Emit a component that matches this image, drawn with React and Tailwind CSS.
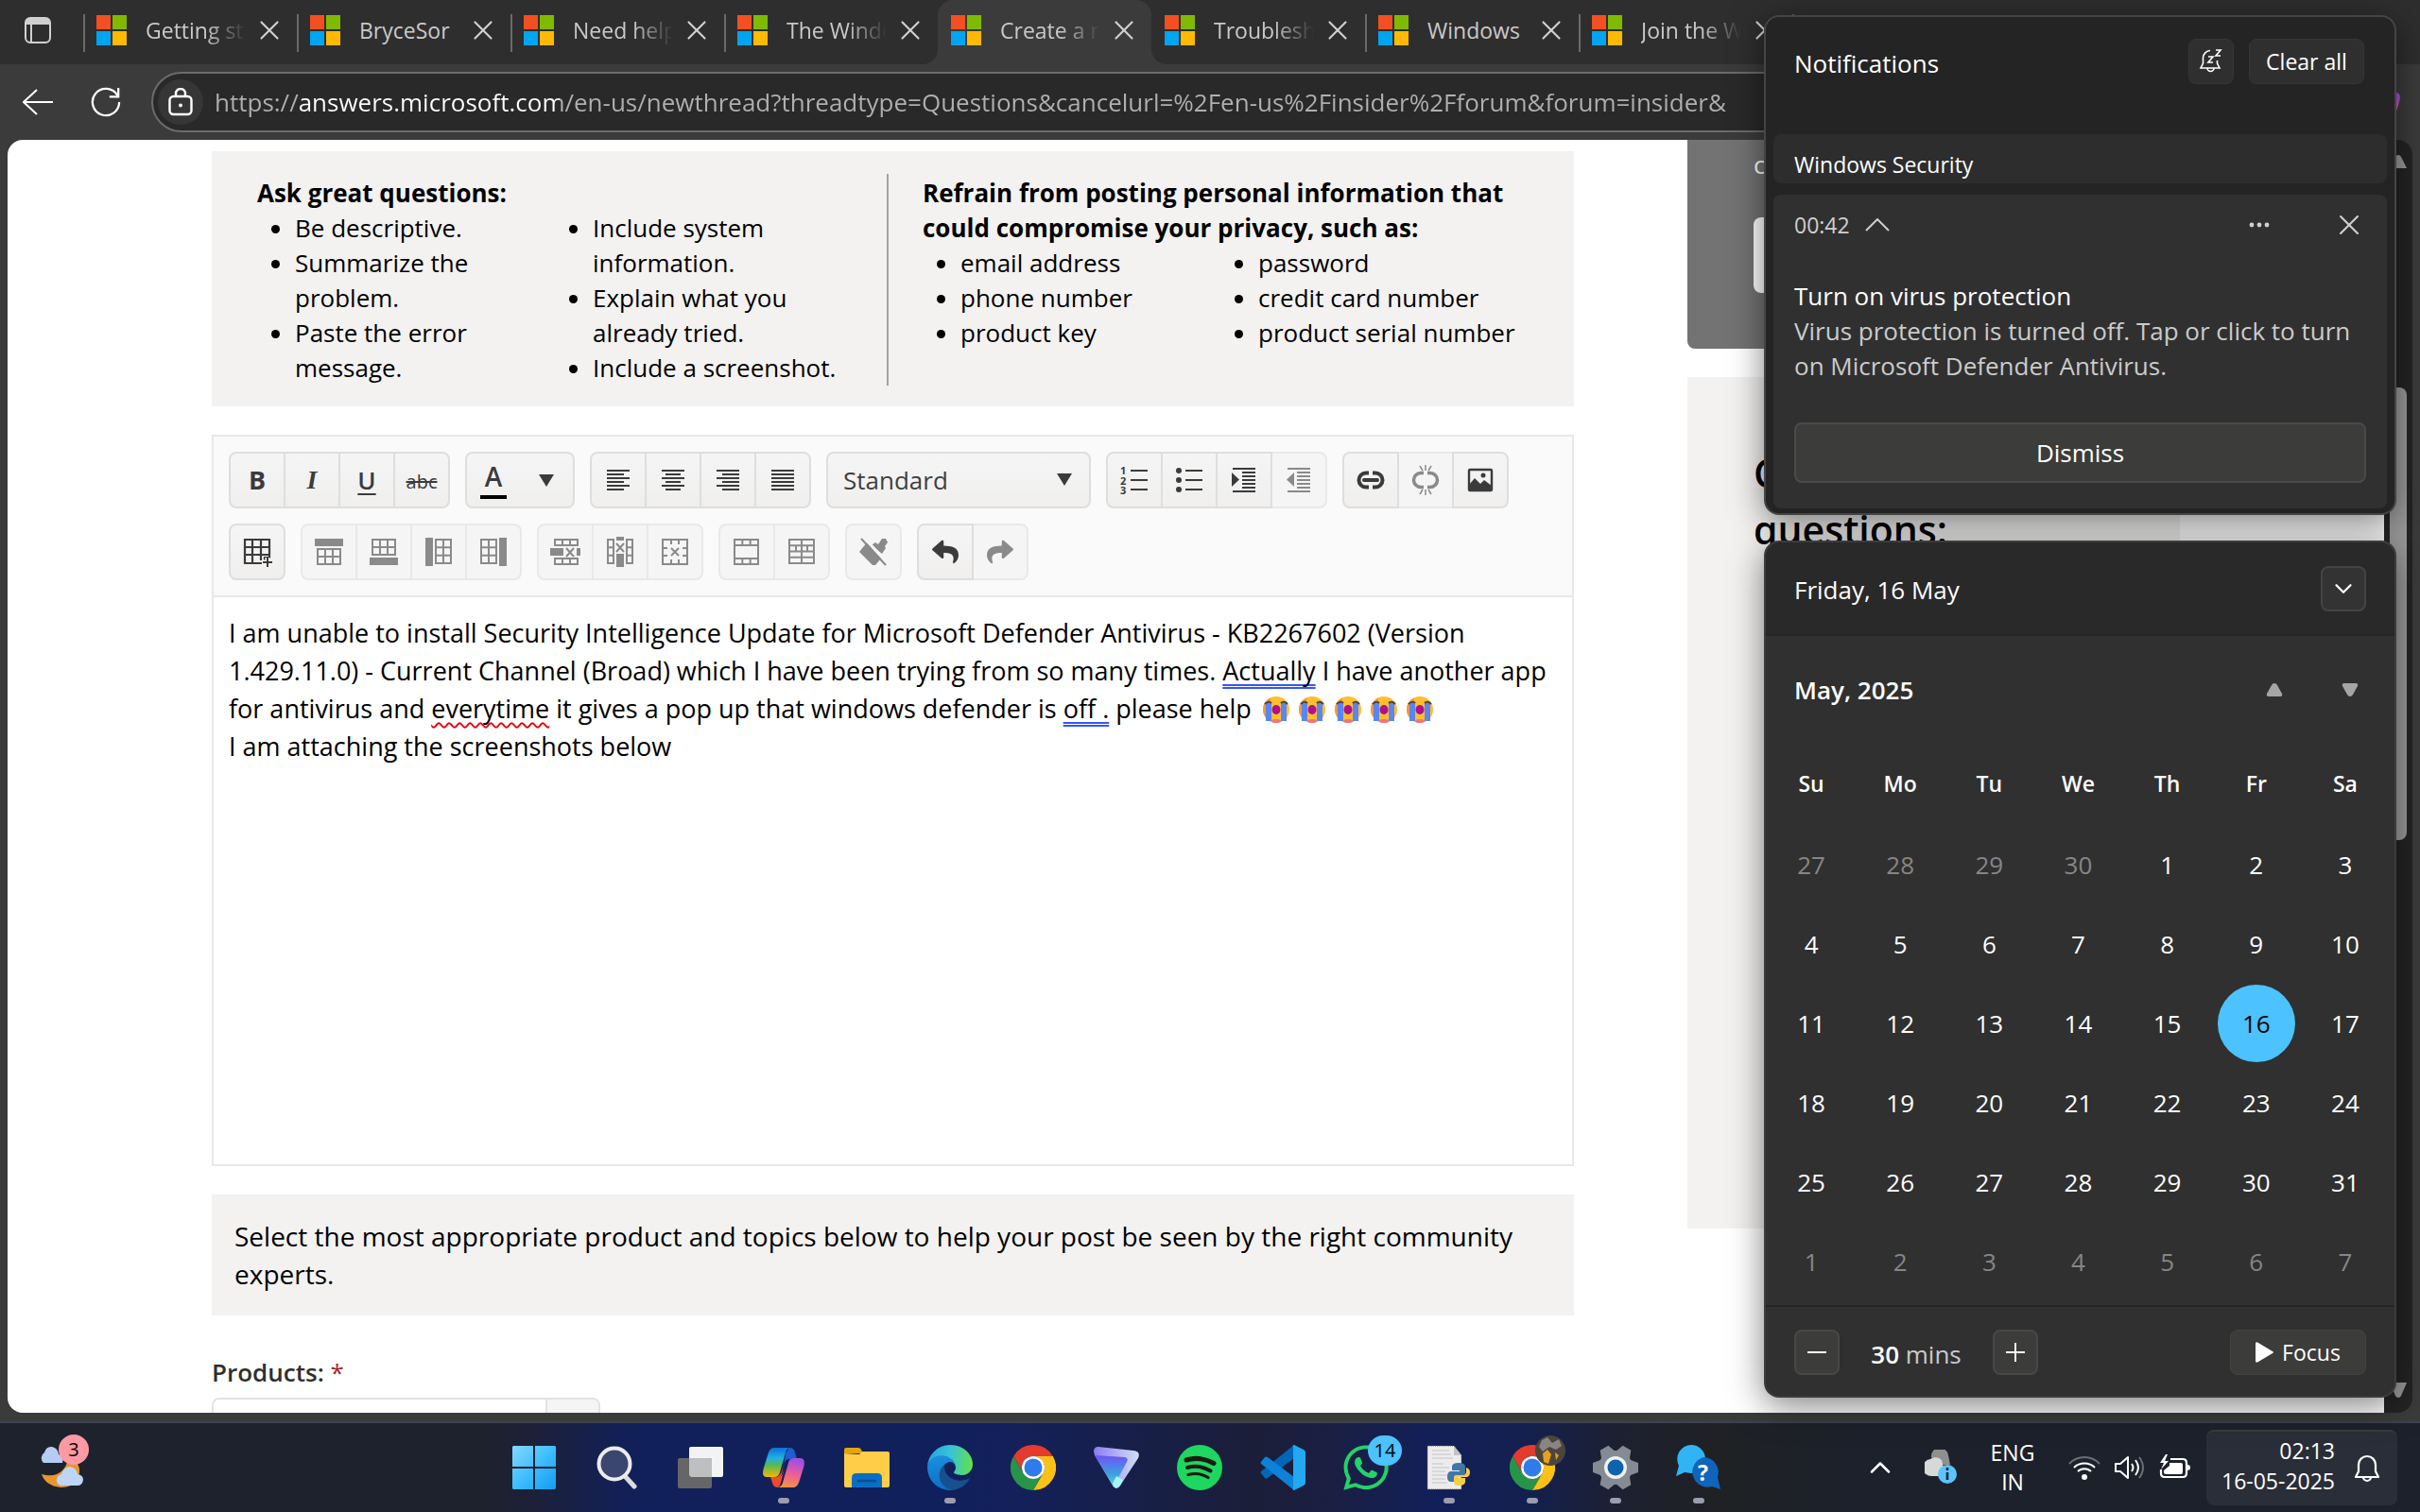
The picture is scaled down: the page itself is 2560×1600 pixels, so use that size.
import { X, ChevronUp, ChevronDown } from "lucide-react"
import { FaWhatsapp, FaReply, FaShare } from "react-icons/fa"

const tabs = [
  { title: "Getting started", fade: true },
  { title: "BryceSor", fade: false },
  { title: "Need help with", fade: true },
  { title: "The Windows", fade: true },
  { title: "Create a new", fade: true, active: true },
  { title: "Troubleshoot", fade: true },
  { title: "Windows", fade: false },
  { title: "Join the Windows", fade: true },
  { title: "Windows", fade: true },
]

const weekdays = ["Su", "Mo", "Tu", "We", "Th", "Fr", "Sa"]
const weeks = [
  [27, 28, 29, 30, 1, 2, 3],
  [4, 5, 6, 7, 8, 9, 10],
  [11, 12, 13, 14, 15, 16, 17],
  [18, 19, 20, 21, 22, 23, 24],
  [25, 26, 27, 28, 29, 30, 31],
  [1, 2, 3, 4, 5, 6, 7],
]

/* ---------- Browser chrome ---------- */

function MicrosoftLogo() {
  return (
    <svg width="32" height="32" viewBox="0 0 32 32" className="shrink-0">
      <rect width="15" height="15" fill="#f25022" />
      <rect x="17" width="15" height="15" fill="#7fba00" />
      <rect y="17" width="15" height="15" fill="#00a4ef" />
      <rect x="17" y="17" width="15" height="15" fill="#ffb900" />
    </svg>
  )
}

function TabStrip() {
  return (
    <div className="flex h-[68px] overflow-hidden bg-[#2e2e2e]">
      <button aria-label="Tab actions menu" className="w-[88px] shrink-0 pb-1 pl-[26px]">
        <svg width="28" height="28" viewBox="0 0 28 28">
          <rect x="1" y="1" width="26" height="26" rx="5" fill="none" stroke="#d0d0d0" strokeWidth="2" />
          <path d="M1 8V6a5 5 0 0 1 5-5h16a5 5 0 0 1 5 5v2z" fill="#d0d0d0" />
          <path d="M7 8v18" stroke="#d0d0d0" strokeWidth="2" />
        </svg>
      </button>
      {tabs.map((tab, i) => (
        <div
          key={i}
          className={
            tab.active
              ? "relative flex w-[226px] shrink-0 items-center rounded-t-2xl bg-[#3b3b3b] pb-1 pl-[14px]"
              : "relative flex w-[226px] shrink-0 items-center pb-1 pl-[14px]"
          }
        >
          {!tab.active && i !== 5 && <span className="absolute top-[15px] left-0 h-10 w-[2px] bg-[#6a6a6a]" />}
          {tab.active && (
            <>
              <svg className="absolute bottom-0 -left-4" width="16" height="16">
                <path d="M16 0v16H0A16 16 0 0 0 16 0z" fill="#3b3b3b" />
              </svg>
              <svg className="absolute -right-4 bottom-0" width="16" height="16">
                <path d="M0 0v16h16A16 16 0 0 1 0 0z" fill="#3b3b3b" />
              </svg>
            </>
          )}
          <MicrosoftLogo />
          <span
            className={
              tab.fade
                ? "ml-5 w-[106px] overflow-hidden text-[23px] whitespace-nowrap text-[#c9c9c9] [mask-image:linear-gradient(to_right,#000_60%,transparent)]"
                : "ml-5 w-[106px] overflow-hidden text-[23px] whitespace-nowrap text-[#c9c9c9]"
            }
          >
            {tab.title}
          </span>
          <button aria-label={`Close ${tab.title}`} className="ml-2 text-[#d0d0d0]">
            <X size={34} strokeWidth={1.5} />
          </button>
        </div>
      ))}
    </div>
  )
}

function AddressBar() {
  return (
    <div className="flex h-20 items-center bg-[#3b3b3b] pr-[21px] pl-6">
      <button aria-label="Back" className="flex w-8 shrink-0 justify-center">
        <svg width="32" height="28" viewBox="0 0 32 28" fill="none" stroke="#fff" strokeWidth="2">
          <path d="M15 1L1 14l14 13M1 14h31" />
        </svg>
      </button>
      <button aria-label="Refresh" className="ml-10 shrink-0">
        <svg width="32" height="34" viewBox="0 0 34 34" fill="none" stroke="#fff" strokeWidth="2.4">
          <path d="M30 9.500A15 15 0 1 0 32 17" />
          <path d="M31 1v10H21" />
        </svg>
      </button>
      <div className="ml-8 flex h-16 flex-1 items-center rounded-full border-2 border-[#6b6b6b] bg-[#292929] pl-[5px]">
        <button aria-label="Site information" className="flex size-12 shrink-0 items-center justify-center rounded-full bg-[#363636]">
          <svg width="26" height="30" viewBox="0 0 26 30" fill="none" stroke="#fff" strokeWidth="2.400">
            <rect x="1.500" y="9" width="23" height="19" rx="4" />
            <path d="M8 9V6a5 5 0 0 1 10 0v3" />
            <circle cx="13" cy="18.500" r="2" fill="#fff" stroke="none" />
          </svg>
        </button>
        <input
          aria-label="Address"
          defaultValue="https://answers.microsoft.com/en-us/newthread?threadtype=Questions&cancelurl=%2Fen-us%2Finsider%2Fforum&forum=insider&"
          className="ml-3 w-full bg-transparent bg-[linear-gradient(to_right,#b0b0b0_90px,#fff_90px,#fff_365px,#b0b0b0_365px)] bg-clip-text text-[26px] text-transparent outline-none"
        />
      </div>
      <button aria-label="Copilot" className="ml-2 shrink-0">
        <CopilotLogo size={44} />
      </button>
    </div>
  )
}

/* ---------- Page ---------- */

function Guidance() {
  return (
    <section className="flex bg-[#f3f2f1] pt-6 pr-8 pb-[22px] pl-12 text-[26px] leading-[37px] text-black">
      <div className="w-[666px] shrink-0 pt-[2px]">
        <h2 className="font-bold">Ask great questions:</h2>
        <div className="grid w-[630px] grid-cols-2">
          <ul className="list-disc pl-10">
            <li>Be descriptive.</li>
            <li>Summarize the problem.</li>
            <li>Paste the error message.</li>
          </ul>
          <ul className="list-disc pl-10">
            <li>Include system information.</li>
            <li>Explain what you already tried.</li>
            <li>Include a screenshot.</li>
          </ul>
        </div>
      </div>
      <div className="flex-1 border-l-2 border-[#a3a3a3] pt-[2px] pl-9">
        <h2 className="font-bold">Refrain from posting personal information that could compromise your privacy, such as:</h2>
        <div className="grid grid-cols-[315px_1fr]">
          <ul className="list-disc pl-10">
            <li>email address</li>
            <li>phone number</li>
            <li>product key</li>
          </ul>
          <ul className="list-disc pl-10">
            <li>password</li>
            <li>credit card number</li>
            <li>product serial number</li>
          </ul>
        </div>
      </div>
    </section>
  )
}

// Outline of a table, split evenly into rows and columns
function Grid({ x, y, w, h, cols, rows }) {
  let d = `M${x} ${y}h${w}v${h}h${-w}z`
  for (let c = 1; c < cols; c++) d += `M${x + (w * c) / cols} ${y}v${h}`
  for (let r = 1; r < rows; r++) d += `M${x} ${y + (h * r) / rows}h${w}`
  return <path d={d} fill="none" stroke="currentColor" strokeWidth="2" />
}

function Lines({ items, h = 2 }) {
  return items.map(([x, y, w]) => <rect key={y} x={x} y={y} width={w} height={h} fill="currentColor" />)
}

function Icon({ children }) {
  return (
    <svg width="32" height="32" viewBox="0 0 32 32">
      {children}
    </svg>
  )
}

const alignLeft = [[4, 5, 24], [4, 9, 18], [4, 13, 24], [4, 17, 18], [4, 21, 24], [4, 25, 18]]
const alignCenter = [[4, 5, 24], [8, 9, 16], [4, 13, 24], [8, 17, 16], [4, 21, 24], [8, 25, 16]]
const alignRight = [[4, 5, 24], [10, 9, 18], [4, 13, 24], [10, 17, 18], [4, 21, 24], [10, 25, 18]]
const justify = [[4, 5, 24], [4, 9, 24], [4, 13, 24], [4, 17, 24], [4, 21, 24], [4, 25, 24]]
const indentLines = [[4, 3, 24], [14, 7, 14], [14, 11, 14], [14, 15, 14], [14, 19, 14], [14, 23, 14], [4, 27, 24]]

const linkRings = "M14 8.500H11a7.500 7.500 0 0 0 0 15h3M18 8.500h3a7.500 7.500 0 0 1 0 15h-3"

const rowOne = [
  [
    { label: "Bold", icon: <span className="text-[27px] font-bold">B</span> },
    { label: "Italic", icon: <span className="font-['Liberation_Serif',serif] text-[28px] font-bold italic">I</span> },
    { label: "Underline", icon: <span className="text-[26px] leading-[32px] font-semibold underline decoration-2 underline-offset-4">U</span> },
    { label: "Strikethrough", icon: <span className="pt-1 text-[20px] line-through">abc</span> },
  ],
  [
    {
      label: "Font color",
      side: "left",
      icon: (
        <span className="flex flex-col items-center text-[28px] leading-[32px] font-semibold">
          A<span className="mt-1 h-1 w-7 bg-black" />
        </span>
      ),
    },
    { label: "More colors", side: "right", icon: <Icon><path d="M8 10h16l-8 13z" fill="currentColor" /></Icon> },
  ],
  [
    { label: "Align left", icon: <Icon><Lines items={alignLeft} /></Icon> },
    { label: "Center", icon: <Icon><Lines items={alignCenter} /></Icon> },
    { label: "Align right", icon: <Icon><Lines items={alignRight} /></Icon> },
    { label: "Justify", icon: <Icon><Lines items={justify} /></Icon> },
  ],
]

const rowOneEnd = [
  [
    {
      label: "Numbered list",
      icon: (
        <Icon>
          <Lines items={[[12, 5, 18], [12, 15, 18], [12, 25, 18]]} />
          <text x="1" y="10" fontSize="11" fontWeight="700" fill="currentColor">1</text>
          <text x="1" y="21" fontSize="11" fontWeight="700" fill="currentColor">2</text>
          <text x="1" y="31" fontSize="11" fontWeight="700" fill="currentColor">3</text>
        </Icon>
      ),
    },
    {
      label: "Bulleted list",
      icon: (
        <Icon>
          <Lines items={[[12, 5, 18], [12, 15, 18], [12, 25, 18]]} />
          <circle cx="5" cy="6" r="3" fill="currentColor" />
          <circle cx="5" cy="16" r="3" fill="currentColor" />
          <circle cx="5" cy="26" r="3" fill="currentColor" />
        </Icon>
      ),
    },
    { label: "Indent", icon: <Icon><Lines items={indentLines} /><path d="M3 8v15l8-7.500z" fill="currentColor" /></Icon> },
    { label: "Outdent", disabled: true, icon: <Icon><Lines items={indentLines} /><path d="M11 8v15l-8-7.500z" fill="currentColor" /></Icon> },
  ],
  [
    {
      label: "Insert link",
      icon: (
        <Icon>
          <path d={linkRings} fill="none" stroke="currentColor" strokeWidth="4" />
          <path d="M9 16h14" stroke="currentColor" strokeWidth="4" strokeLinecap="round" />
        </Icon>
      ),
    },
    {
      label: "Remove link",
      disabled: true,
      icon: (
        <Icon>
          <path d={linkRings} fill="none" stroke="currentColor" strokeWidth="3.500" />
          <path d="M16 0v6M10 1l3 5M22 1l-3 5M16 26v6M10 31l3-5M22 31l-3-5" stroke="currentColor" strokeWidth="1.500" />
        </Icon>
      ),
    },
    {
      label: "Insert image",
      icon: (
        <Icon>
          <rect x="4" y="5" width="24" height="22" rx="1" fill="none" stroke="currentColor" strokeWidth="2.400" />
          <path d="M4 21l6-7 6 6 4-4 8 6v5H4z" fill="currentColor" />
          <circle cx="19" cy="11" r="2.500" fill="currentColor" />
        </Icon>
      ),
    },
  ],
]

const rowTwo = [
  [
    {
      label: "Create table",
      icon: (
        <Icon>
          <path d="M3 3h26v19h-5v6H3zM11 3v25M20 3v22M3 11h26M3 19h26" fill="none" stroke="currentColor" strokeWidth="2.200" />
          <path d="M21 27h11M27 22v10" stroke="#f3f3f3" strokeWidth="5" />
          <path d="M22 27h10M27 22v10" stroke="currentColor" strokeWidth="2" />
        </Icon>
      ),
    },
  ],
  [
    { label: "Add row above", disabled: true, icon: <Icon><rect x="1" y="2" width="30" height="8" fill="currentColor" /><Grid x={4} y={13} w={24} h={16} cols={3} rows={2} /></Icon> },
    { label: "Add row below", disabled: true, icon: <Icon><Grid x={4} y={3} w={24} h={16} cols={3} rows={2} /><rect x="1" y="22" width="30" height="8" fill="currentColor" /></Icon> },
    { label: "Add column left", disabled: true, icon: <Icon><rect x="2" y="1" width="8" height="30" fill="currentColor" /><Grid x={13} y={3} w={16} h={25} cols={2} rows={3} /></Icon> },
    { label: "Add column right", disabled: true, icon: <Icon><Grid x={3} y={3} w={16} h={25} cols={2} rows={3} /><rect x="22" y="1" width="8" height="30" fill="currentColor" /></Icon> },
  ],
  [
    {
      label: "Delete row",
      disabled: true,
      icon: <Icon><Grid x={5} y={3} w={24} h={6} cols={3} rows={1} /><rect y="12" width="14" height="8" fill="currentColor" /><path d="M17 12l8 9M25 12l-8 9" stroke="currentColor" strokeWidth="2" /><rect x="28" y="12" width="4" height="8" fill="currentColor" /><Grid x={5} y={23} w={24} h={6} cols={3} rows={1} /></Icon>,
    },
    {
      label: "Delete column",
      disabled: true,
      icon: <Icon><Grid x={3} y={3} w={6} h={25} cols={1} rows={3} /><rect x="12" y="0" width="8" height="4" fill="currentColor" /><path d="M12 7l8 9M20 7l-8 9" stroke="currentColor" strokeWidth="2" /><rect x="12" y="18" width="8" height="14" fill="currentColor" /><Grid x={23} y={3} w={6} h={25} cols={1} rows={3} /></Icon>,
    },
    {
      label: "Delete table",
      disabled: true,
      icon: <Icon><Grid x={3} y={3} w={26} h={26} cols={1} rows={1} /><path d="M12 3v5M20 3v5M12 24v5M20 24v5M3 12h5M3 20h5M24 12h5M24 20h5M12 12l8 8M20 12l-8 8" stroke="currentColor" strokeWidth="2" /></Icon>,
    },
  ],
  [
    { label: "Merge cells", disabled: true, icon: <Icon><Grid x={3} y={3} w={25} h={26} cols={1} rows={1} /><Grid x={3} y={3} w={25} h={6} cols={3} rows={1} /><Grid x={3} y={23} w={25} h={6} cols={3} rows={1} /></Icon> },
    { label: "Split cell", disabled: true, icon: <Icon><Grid x={3} y={3} w={26} h={25} cols={2} rows={4} /><path d="M10 9v6M22 9v6" stroke="currentColor" strokeWidth="2" /></Icon> },
  ],
  [
    {
      label: "Clear formatting",
      disabled: true,
      icon: (
        <Icon>
          <path d="M1 16l8-10 15 17-6 7h-3z" fill="currentColor" />
          <path d="M14 9l4-3 3 2 4-6h4l2 4-3 4 1 2-4 6z" fill="currentColor" />
          <path d="M6 1l25 27" stroke="#f5f5f5" strokeWidth="3" />
          <path d="M3 2l26 28" stroke="currentColor" strokeWidth="2" />
        </Icon>
      ),
    },
  ],
  [
    { label: "Undo", icon: <FaReply size={28} /> },
    { label: "Redo", disabled: true, icon: <FaShare size={28} /> },
  ],
]

function buttonClass(b) {
  if (b.side === "left")
    return "flex h-[60px] w-[58px] items-center justify-center rounded-l-lg border-2 border-r-0 border-[#dedede] bg-linear-to-b from-[#f5f5f5] to-[#f0efee] text-[#3b3b3b]"
  if (b.side === "right")
    return "flex h-[60px] w-[58px] items-center justify-center rounded-r-lg border-2 border-l-0 border-[#dedede] bg-linear-to-b from-[#f5f5f5] to-[#f0efee] text-[#3b3b3b]"
  if (b.disabled)
    return "flex h-[60px] w-[60px] items-center justify-center border-2 border-[#e9e9e9] bg-[#f5f5f5] text-[#8a8a8a] not-first:-ml-[2px] first:rounded-l-lg last:rounded-r-lg"
  return "relative flex h-[60px] w-[60px] items-center justify-center border-2 border-[#dedede] bg-linear-to-b from-[#f5f5f5] to-[#f0efee] text-[#3b3b3b] not-first:-ml-[2px] first:rounded-l-lg last:rounded-r-lg"
}

function ButtonGroup({ buttons }) {
  return (
    <div className="flex">
      {buttons.map((b) => (
        <button key={b.label} aria-label={b.label} disabled={b.disabled} className={buttonClass(b)}>
          {b.icon}
        </button>
      ))}
    </div>
  )
}

function CryingFace() {
  return (
    <svg role="img" aria-label="loudly crying face" className="mx-[5px] inline-block align-[-5px]" width="28" height="28" viewBox="0 0 28 28">
      <circle cx="14" cy="14" r="14" fill="#fdbf2d" />
      <path d="M0 14A14 14 0 0 1 8 1.400V26A14 14 0 0 1 0 14z" fill="#ee9a3c" />
      <rect x="3" y="7" width="6" height="19" fill="#5b85f5" />
      <rect x="19" y="7" width="6" height="19" fill="#5b85f5" />
      <path d="M2 8q4-4 7-1M19 7q3-3 7 1" stroke="#47434f" strokeWidth="2" fill="none" />
      <ellipse cx="14" cy="14" rx="4.500" ry="5" fill="#b0108a" />
      <ellipse cx="14" cy="26" rx="5" ry="2" fill="#f0747c" />
    </svg>
  )
}

function Editor() {
  return (
    <section className="mt-[30px] border-2 border-[#e8e8e8] bg-white">
      <div role="toolbar" aria-label="Formatting" className="flex flex-col gap-4 border-b-2 border-[#e8e8e8] bg-[#fafafa] p-4">
        <div className="flex gap-4">
          {rowOne.map((g, i) => <ButtonGroup key={i} buttons={g} />)}
          <div className="relative">
            <select
              aria-label="Text style"
              className="h-[60px] w-[280px] appearance-none rounded-lg border-2 border-[#dedede] bg-linear-to-b from-[#f5f5f5] to-[#f0efee] pl-4 text-[26px] text-[#3f3f3f]"
            >
              <option>Standard</option>
              <option>Heading</option>
            </select>
            <svg className="pointer-events-none absolute top-[23px] right-5" width="16" height="13">
              <path d="M0 0h16L8 13z" fill="#3b3b3b" />
            </svg>
          </div>
          {rowOneEnd.map((g, i) => <ButtonGroup key={i} buttons={g} />)}
        </div>
        <div className="flex gap-4">
          {rowTwo.map((g, i) => <ButtonGroup key={i} buttons={g} />)}
        </div>
      </div>
      <div
        role="textbox"
        aria-label="Question details"
        aria-multiline="true"
        contentEditable
        suppressContentEditableWarning
        spellCheck={false}
        className="min-h-[600px] px-4 pt-[18px] text-[27px] leading-[40px] text-black outline-none"
      >
        <p>
          I am unable to install Security Intelligence Update for Microsoft Defender Antivirus - KB2267602 (Version
          1.429.11.0) - Current Channel (Broad) which I have been trying from so many times.{" "}
          <span className="underline decoration-[#3355ff] decoration-double decoration-2 underline-offset-4 [text-decoration-skip-ink:none]">Actually</span> I have
          another app for antivirus and <span className="underline decoration-red-600 decoration-wavy decoration-2 underline-offset-4 [text-decoration-skip-ink:none]">everytime</span> it gives a pop up
          that windows defender is{" "}
          <span className="underline decoration-[#3355ff] decoration-double decoration-2 underline-offset-4">off .</span> please help{" "}
          <CryingFace />
          <CryingFace />
          <CryingFace />
          <CryingFace />
          <CryingFace />
        </p>
        <p>I am attaching the screenshots below</p>
      </div>
    </section>
  )
}

function ProductPicker() {
  return (
    <>
      <section className="mt-[30px] bg-[#f3f2f1] px-6 py-6 text-[28px] leading-[40px] text-black">
        Select the most appropriate product and topics below to help your post be seen by the right community experts.
      </section>
      <label htmlFor="products" className="mt-10 block text-[26px] leading-[40px] font-semibold text-[#2f2f2f]">
        Products: <span className="font-normal text-[#a4262c]">*</span>
      </label>
      <div className="mt-[7px] flex h-[60px] w-[411px] overflow-hidden rounded-lg border-2 border-[#e3e3e3]">
        <input id="products" className="min-w-0 flex-1 bg-white" />
        <button aria-label="Open product list" className="w-14 border-l-2 border-[#e3e3e3] bg-[#f5f5f5]" />
      </div>
    </>
  )
}

function Sidebar() {
  return (
    <aside className="w-[521px] shrink-0">
      <div className="h-[221px] rounded-b-lg bg-[#737373] px-[70px] pt-[6px] text-[26px] leading-[40px] text-white">
        <label htmlFor="search">content</label>
        <input id="search" className="mt-9 block h-20 w-full rounded-lg bg-white" />
      </div>
      <div className="mt-[30px] h-[901px] bg-[#f3f2f1] px-[70px] pt-[71px]">
        <h2 className="w-[240px] text-[41px] leading-[60px] font-semibold text-black">Common questions:</h2>
      </div>
    </aside>
  )
}

function Page() {
  return (
    <div className="flex min-h-0 flex-1 bg-[#3b3b3b] px-2 pb-[9px]">
      <div className="min-w-0 flex-1 overflow-hidden rounded-l-2xl bg-white">
        <div className="flex gap-[120px] px-[216px]">
          <main className="min-w-0 flex-1 pt-3">
            <Guidance />
            <Editor />
            <ProductPicker />
          </main>
          <Sidebar />
        </div>
      </div>
      <div className="flex w-[30px] shrink-0 flex-col items-center rounded-r-2xl bg-[#242424] pt-4 pb-4">
        <svg width="18" height="14"><path d="M9 0q2 0 3 2l6 12H0L6 2q1-2 3-2z" fill="#9b9b9b" /></svg>
        <div className="mt-[232px] h-[479px] w-[18px] rounded-lg bg-[#9b9b9b]" />
        <svg className="mt-auto" width="18" height="16"><path d="M9 16q-2 0-3-2L0 0h18l-6 14q-1 2-3 2z" fill="#9b9b9b" /></svg>
      </div>
    </div>
  )
}

/* ---------- Notification centre ---------- */

function Notifications() {
  return (
    <section className="rounded-2xl border-2 border-[#454545] bg-[#242424] pb-[5px] text-white shadow-[0_8px_36px_rgba(0,0,0,0.5)]">
      <header className="flex items-center pt-[23px] pr-8 pl-[30px]">
        <h2 className="flex-1 pt-1 text-[26px] leading-[44px]">Notifications</h2>
        <button aria-label="Do not disturb" className="flex size-12 items-center justify-center rounded-lg border border-[#363636] bg-[#2f2f2f]">
          <svg width="26" height="28" viewBox="0 0 26 28" fill="none" stroke="#fff" strokeWidth="1.600">
            <path d="M12 2.500A8 8 0 0 0 4.500 10v6L2 21h20l-2.500-5v-3" />
            <path d="M9 21a3.500 3.500 0 0 0 7 0" />
            <path d="M10 9h5l-5 6h5M18 2h5l-5 6h5" />
          </svg>
        </button>
        <button className="ml-4 h-12 w-[122px] rounded-lg border border-[#363636] bg-[#2f2f2f] text-[23px]">Clear all</button>
      </header>
      <h3 className="mx-2 mt-[53px] rounded-lg bg-[#2d2d2d] pt-4 pb-1 pl-[22px] text-[23px] leading-[32px]">Windows Security</h3>
      <article className="mx-2 mt-3 rounded-lg bg-[#303030] px-[22px] pt-2 pb-[27px]">
        <div className="flex h-12 items-center text-[#cfcfcf]">
          <time className="text-[23px]">00:42</time>
          <button aria-label="Collapse" className="ml-4">
            <svg width="26" height="14" viewBox="0 0 26 14" fill="none" stroke="currentColor" strokeWidth="2"><path d="M1 13L13 1l12 12" /></svg>
          </button>
          <button aria-label="More options" className="ml-auto">
            <svg width="22" height="6" fill="currentColor"><circle cx="3" cy="3" r="2.400" /><circle cx="11" cy="3" r="2.400" /><circle cx="19" cy="3" r="2.400" /></svg>
          </button>
          <button aria-label="Close" className="ml-[66px]"><X size={36} strokeWidth={1.400} /></button>
        </div>
        <h4 className="mt-[33px] text-[26px] leading-[37px]">Turn on virus protection</h4>
        <p className="text-[26px] leading-[37px] text-[#cbcbcb]">
          Virus protection is turned off. Tap or click to turn on Microsoft Defender Antivirus.
        </p>
        <button className="mt-[41px] h-16 w-full rounded-lg border-2 border-[#4a4a4a] bg-[#3c3c3a] text-[26px]">Dismiss</button>
      </article>
    </section>
  )
}

function Calendar() {
  return (
    <section className="rounded-2xl border-2 border-[#3c3c3c] bg-[#303030] text-white shadow-[0_8px_36px_rgba(0,0,0,0.5)]">
      <header className="flex h-[99px] items-center rounded-t-2xl border-b-2 border-[#262626] bg-[#292929] pr-[30px] pl-[30px]">
        <h2 className="flex-1 pt-1 text-[26px]">Friday, 16 May</h2>
        <button aria-label="Hide calendar" className="flex size-12 items-center justify-center rounded-lg border-2 border-[#444] bg-[#333]">
          <ChevronDown size={30} strokeWidth={1.800} />
        </button>
      </header>
      <div className="flex items-center pt-[35px] pr-[38px] pl-[30px]">
        <h3 className="flex-1 text-[26px] leading-[44px] font-semibold">May, 2025</h3>
        <button aria-label="Previous month">
          <svg width="18" height="14"><path d="M9 0q2 0 3 2l5 9q1 3-2 3H3q-3 0-2-3l5-9q1-2 3-2z" fill="#a5a5a5" /></svg>
        </button>
        <button aria-label="Next month" className="ml-[62px]">
          <svg width="18" height="14"><path d="M9 14q2 0 3-2l5-9q1-3-2-3H3Q0 0 1 3l5 9q1 2 3 2z" fill="#a5a5a5" /></svg>
        </button>
      </div>
      <div className="mt-[34px] mb-1 pr-[5px] pl-[1px]">
        <table className="w-full table-fixed border-separate border-spacing-0 text-center text-[26px]">
          <thead>
            <tr className="h-[87px] text-[23px]">
              {weekdays.map((d) => <th key={d} className="font-semibold">{d}</th>)}
            </tr>
          </thead>
          <tbody>
            {weeks.map((week, w) => (
              <tr key={w} className="h-[84px]">
                {week.map((day, i) => {
                  const outside = (w === 0 && day > 7) || w === 5
                  const today = w === 2 && day === 16
                  return (
                    <td key={i} className="p-0">
                      <button
                        className={
                          today
                            ? "size-[82px] rounded-full bg-[#4cc2ff] text-black"
                            : outside
                              ? "size-[82px] rounded-full text-[#868686]"
                              : "size-[82px] rounded-full"
                        }
                      >
                        {day}
                      </button>
                    </td>
                  )
                })}
              </tr>
            ))}
          </tbody>
        </table>
      </div>
      <footer className="flex items-center border-t-2 border-[#262626] px-[30px] pt-6 pb-[22px]">
        <button aria-label="Decrease time" className="flex size-12 items-center justify-center rounded-lg border-2 border-[#484848] bg-[#3c3c3a]">
          <svg width="20" height="20" stroke="#fff" strokeWidth="2"><path d="M0 10h20" /></svg>
        </button>
        <p className="w-[162px] pt-1 text-center text-[26px] text-[#cbcbcb]">
          <span className="font-semibold text-white">30</span> mins
        </p>
        <button aria-label="Increase time" className="flex size-12 items-center justify-center rounded-lg border-2 border-[#484848] bg-[#3c3c3a]">
          <svg width="20" height="20" stroke="#fff" strokeWidth="2"><path d="M0 10h20M10 0v20" /></svg>
        </button>
        <button className="ml-auto flex h-12 w-[144px] items-center justify-center gap-2 rounded-lg border border-[#424242] bg-[#3c3c3a] text-[23px]">
          <svg width="20" height="22"><path d="M0 2q0-3 3-1l15 9q2 1 0 2L3 21q-3 2-3-1z" fill="#fff" /></svg>
          Focus
        </button>
      </footer>
    </section>
  )
}

/* ---------- Taskbar ---------- */

function WeatherIcon() {
  return (
    <svg width="50" height="46" viewBox="0 0 50 46">
      <path d="M4 30q14 4 22-4 6-6 5-14 14 4 13 16-2 16-20 16Q8 42 4 30z" fill="#e8962e" />
      <path d="M6 18a7 7 0 0 1 1-11Q9 0 15 1q6 1 7 8 6 2 4 9z" fill="#b5cdf5" />
      <path d="M24 42q-5-2-4-7 1-4 5-5 3-8 9-8 7 1 8 8 6 1 6 6-1 6-6 6z" fill="#bdd6f8" />
    </svg>
  )
}

function StartIcon() {
  return (
    <svg width="46" height="46" viewBox="0 0 46 46">
      <defs>
        <linearGradient id="start" x1="0" y1="0" x2="46" y2="46" gradientUnits="userSpaceOnUse">
          <stop stopColor="#84d8fd" />
          <stop offset="0.500" stopColor="#40beff" />
          <stop offset="1" stopColor="#119cf0" />
        </linearGradient>
      </defs>
      <path fill="url(#start)" d="M1 0h21v22H0V1zM24 0h21l1 1v21H24zM0 24h22v22H1l-1-1zM24 24h22v21l-1 1H24z" />
    </svg>
  )
}

function SearchIcon() {
  return (
    <svg width="44" height="46" viewBox="0 0 44 46">
      <path d="M30 32l10 11" stroke="#dcdcdc" strokeWidth="5" strokeLinecap="round" />
      <circle cx="19" cy="19" r="16.500" fill="#3a4570" stroke="#ececec" strokeWidth="4" />
    </svg>
  )
}

function TaskViewIcon() {
  return (
    <svg width="48" height="44" viewBox="0 0 48 44">
      <rect x="12" width="36" height="32" rx="2" fill="#f3f3f3" />
      <rect y="12" width="36" height="32" rx="2" fill="#666" />
      <path d="M12 12h24v20H14l-2-2z" fill="#bdbfc0" />
    </svg>
  )
}

function CopilotLogo({ size = 44 }) {
  return (
    <svg width={size} height={size} viewBox="0 0 44 42">
      <defs>
        <linearGradient id="copilotA" x1="0" y1="0" x2="0" y2="1">
          <stop stopColor="#0b72d8" />
          <stop offset="0.350" stopColor="#22aee6" />
          <stop offset="0.600" stopColor="#58b950" />
          <stop offset="1" stopColor="#f5b806" />
        </linearGradient>
        <linearGradient id="copilotB" x1="0.200" y1="0" x2="0" y2="1">
          <stop stopColor="#a34fe0" />
          <stop offset="0.450" stopColor="#ea5f96" />
          <stop offset="1" stopColor="#f79a3a" />
        </linearGradient>
      </defs>
      <path d="M28 0q5 0 6 5l2 7h-8q-4 0-5 4l-1 4 2-14z" fill="#1b5fd0" />
      <path d="M12 0h17q-4 1-5 5l-6 21q-1 5-6 5H4q-6 0-3-10L6 5q2-5 6-5z" fill="url(#copilotA)" />
      <path d="M9 31h5q3 0 5-4l3-9-4 18z" fill="#ee4a2c" />
      <path d="M32 42H16q4-1 5-5l6-21q1-5 6-5h6q7 0 4 10l-5 16q-2 5-6 5z" fill="url(#copilotB)" />
      <path d="M16 42q-5 0-6-5l-2-6h8q4 0 5-4l2-6-4 16q-1 4-3 5z" fill="#f0492b" />
    </svg>
  )
}

function FolderIcon() {
  return (
    <svg width="48" height="42" viewBox="0 0 48 42">
      <path d="M0 2q0-2 2-2h13q2 0 3 2l2 4H0z" fill="#e3a50c" />
      <path d="M0 6l16 1 3-3h27q2 0 2 2v34q0 2-2 2H2q-2 0-2-2z" fill="#ffcd48" />
      <path d="M8 42V32q0-5 5-5h22q5 0 5 5v10z" fill="#0a6ec4" />
      <path d="M15 35h18" stroke="#074f93" strokeWidth="2.500" strokeLinecap="round" />
    </svg>
  )
}

function EdgeIcon() {
  return (
    <svg width="48" height="48" viewBox="0 0 256 256">
      <defs>
        <linearGradient id="edgeTop" x1="20" y1="90" x2="250" y2="110" gradientUnits="userSpaceOnUse">
          <stop stopColor="#2aa9e0" />
          <stop offset="0.450" stopColor="#35c3da" />
          <stop offset="1" stopColor="#62e04e" />
        </linearGradient>
        <linearGradient id="edgeMid" x1="60" y1="60" x2="90" y2="250" gradientUnits="userSpaceOnUse">
          <stop stopColor="#1b8fdc" />
          <stop offset="1" stopColor="#0a6fc8" />
        </linearGradient>
      </defs>
      <path fill="#16508f" d="M231 190.500c-3.400 1.800-6.900 3.400-10.500 4.700a101.500 101.500 0 0 1-35.900 6.400c-47.300 0-88.500-32.500-88.500-74.300a31.500 31.500 0 0 1 16.400-27.300c-42.800 1.800-53.800 46.400-53.800 72.500 0 73.900 68.100 81.400 82.800 81.400 7.900 0 19.800-2.300 27-4.600l1.300-.4a128.300 128.300 0 0 0 66.600-52.800 4 4 0 0 0-5.400-5.600z" />
      <path fill="url(#edgeMid)" d="M105.700 241.400a79.200 79.200 0 0 1-22.700-21.300 80.700 80.700 0 0 1 29.500-120c3.200-1.500 8.500-4.100 15.600-4a32.400 32.400 0 0 1 25.700 13 31.900 31.900 0 0 1 6.300 18.700c0-.2 24.500-79.600-80-79.600-43.900 0-80 41.600-80 78.200a130.200 130.200 0 0 0 12.100 56 128 128 0 0 0 156.400 67 75.500 75.500 0 0 1-62.800-8z" />
      <path fill="url(#edgeTop)" d="M152.300 148.900c-.9 1-3.400 2.500-3.400 5.600 0 2.600 1.700 5.200 4.800 7.300 14.300 10 41.400 8.600 41.500 8.600a59.600 59.600 0 0 0 30.300-8.300 61.400 61.400 0 0 0 30.400-52.900c.3-22.400-8-37.300-11.300-43.900C223.500 23.900 177.700 0 128 0A128 128 0 0 0 0 126.200c.5-36.500 36.800-66 80-66 3.500 0 23.500.3 42 10a72.600 72.600 0 0 1 30.900 29.300c6.100 10.600 7.200 24.100 7.200 29.500s-2.700 13.300-7.800 19.900z" />
    </svg>
  )
}

function ChromeIcon() {
  return (
    <svg width="48" height="48" viewBox="0 0 48 48">
      <path d="M3.200 12a24 24 0 0 1 41.600 0H24a12 12 0 0 0-10.400 18z" fill="#e33b2e" />
      <path d="M44.800 12A24 24 0 0 1 24 48l10.400-18A12 12 0 0 0 24 12z" fill="#fbc116" />
      <path d="M24 48A24 24 0 0 1 3.200 12l10.400 18a12 12 0 0 0 20.800 0z" fill="#269547" />
      <circle cx="24" cy="24" r="12" fill="#fff" />
      <circle cx="24" cy="24" r="9.500" fill="#2f7bea" />
    </svg>
  )
}

function ProtonIcon() {
  return (
    <svg width="48" height="44" viewBox="0 0 48 44">
      <defs>
        <linearGradient id="protonA" x1="0" y1="0" x2="0" y2="1">
          <stop stopColor="#6d54f5" />
          <stop offset="0.600" stopColor="#3f9fe0" />
          <stop offset="1" stopColor="#4ae0d8" />
        </linearGradient>
        <linearGradient id="protonB" x1="0" y1="0" x2="1" y2="0">
          <stop stopColor="#8a7cf5" />
          <stop offset="0.600" stopColor="#b9b8f5" />
          <stop offset="1" stopColor="#cfe0f2" />
        </linearGradient>
      </defs>
      <path d="M0 5q0-5 5-5l37 4q8 1 5 8L28 41q-4 6-8 0L1 9z" fill="url(#protonB)" />
      <path d="M1 9l32 2q4 1 2 5L21 42 1 9z" fill="url(#protonA)" />
      <path d="M21 42q3 4 7-1l3-6-7-4-4 8z" fill="#a8f3f0" />
    </svg>
  )
}

function SpotifyIcon() {
  return (
    <svg width="48" height="48" viewBox="0 0 48 48">
      <circle cx="24" cy="24" r="24" fill="#1ed760" />
      <g fill="none" stroke="#1b1b12" strokeLinecap="round">
        <path d="M10 16q15-4.500 29 3.500" strokeWidth="5" />
        <path d="M11 24q13-3.500 24.500 3.500" strokeWidth="4" />
        <path d="M12 31.500q11-3 21 3" strokeWidth="3.200" />
      </g>
    </svg>
  )
}

function VsCodeIcon() {
  return (
    <svg width="48" height="48" viewBox="0 0 48 48">
      <path d="M1 30l4 5q1 1 3 0l28-21V0L1 28q-1 1 0 2z" fill="#0066b8" />
      <path d="M1 18l4-5q1-1 3 0l28 21v14L1 20q-1-1 0-2z" fill="#0c82d8" />
      <path d="M36 0l10 5q2 1 2 3v32q0 2-2 3l-10 5q-2 0-1-2V2q-1-2 1-2z" fill="#23a8f2" />
    </svg>
  )
}

function PythonFileIcon() {
  return (
    <svg width="48" height="48" viewBox="0 0 48 48">
      <path d="M1 1h28l8 10v36H1z" fill="#ececec" stroke="#555" strokeDasharray="1 1" />
      <path d="M29 1v10h8z" fill="#c2c2c2" />
      <path d="M6 6h18M6 10h20M6 14h22M6 20h12M6 24h18M6 28h14M6 32h16M6 36h14M6 40h16" stroke="#c4c4c4" />
      <path d="M34 19q-7 0-7 4v4h8v1H25q-3 1-3 6t4 5h3v-4q0-3 4-3h6q2 0 2-3v-6q0-4-7-4z" fill="#3f77a8" />
      <path d="M34 43q7 0 7-4v-4h-8v-1h10q3-1 3-5t-4-5v4q0 4-4 4h-6q-3 0-3 3v4q0 4 5 4z" fill="#f7cd46" />
    </svg>
  )
}

function GearIcon() {
  return (
    <svg width="48" height="48" viewBox="0 0 48 48">
      <g fill="#848b95">
        {[30, 90, 150].map((a) => (
          <path key={a} d="M19 0h10l3 8v32l-3 8H19l-3-8V8z" transform={`rotate(${a} 24 24)`} />
        ))}
        <circle cx="24" cy="24" r="18" />
      </g>
      <circle cx="24" cy="24" r="12" fill="#f1f1f1" />
      <circle cx="24" cy="24" r="8.500" fill="#0f62ae" />
    </svg>
  )
}

function HelpChatIcon() {
  return (
    <svg width="48" height="48" viewBox="0 0 48 48">
      <path d="M16 0a15 15 0 0 1 0 30l-7-1-9 4 3-11A15 15 0 0 1 16 0z" fill="#30b4f5" />
      <path d="M29 13a16 16 0 0 1 15 21l3 13-9-3a16 16 0 1 1-9-31z" fill="#0f64bb" />
      <text x="23" y="38" fontSize="23" fontWeight="700" fill="#fff">?</text>
    </svg>
  )
}

const apps = [
  { name: "Start", icon: <StartIcon /> },
  { name: "Search", icon: <SearchIcon /> },
  { name: "Task view", icon: <TaskViewIcon /> },
  { name: "Copilot", icon: <CopilotLogo />, running: true },
  { name: "File Explorer", icon: <FolderIcon /> },
  { name: "Edge", icon: <EdgeIcon />, running: true },
  { name: "Chrome", icon: <ChromeIcon /> },
  { name: "Proton VPN", icon: <ProtonIcon /> },
  { name: "Spotify", icon: <SpotifyIcon /> },
  { name: "VS Code", icon: <VsCodeIcon /> },
  { name: "WhatsApp", icon: <FaWhatsapp size={54} color="#22d366" />, badge: "14" },
  { name: "Python file", icon: <PythonFileIcon />, running: true },
  { name: "Chrome profile", icon: <ChromeIcon />, avatar: true, running: true },
  { name: "Settings", icon: <GearIcon />, running: true },
  { name: "Get Help", icon: <HelpChatIcon />, running: true },
]

function Taskbar() {
  return (
    <nav className="flex h-24 shrink-0 items-center border-t-2 border-[#3c4152] bg-[linear-gradient(to_right,#1e222d_0%,#1e222d_20%,#1c2038_22%,#12205a_26%,#10205c_39%,#14205a_42%,#171f48_47%,#1b1e38_52%,#1a1f42_55%,#121f58_59%,#13204f_63%,#1d2030_67%,#1f2123_71%,#1c212c_77%,#1c212c_100%)] pr-6 text-white">
      <div className="w-[521px] shrink-0">
        <button aria-label="Weather" className="relative ml-10 block">
          <WeatherIcon />
          <span className="absolute -top-3 left-[22px] flex size-8 items-center justify-center rounded-full bg-[#ff99a4] text-[20px] text-black">3</span>
        </button>
      </div>
      {apps.map((app) => (
        <button key={app.name} aria-label={app.name} className="relative flex h-[88px] w-[88px] shrink-0 items-center justify-center">
          {app.icon}
          {app.badge && (
            <span className="absolute top-[10px] left-[46px] flex h-8 w-9 items-center justify-center rounded-full bg-[#4cc2ff] text-[20px] text-black">
              {app.badge}
            </span>
          )}
          {app.avatar && (
            <svg className="absolute top-[9px] left-[46px]" width="34" height="34" viewBox="0 0 34 34">
              <circle cx="17" cy="17" r="16" fill="#4b453f" />
              <path d="M8 6l6-3 5 6 7-4 3 7-6 4-7-3-7 5-4-5z" fill="#8a8580" />
              <path d="M9 20l5-4 4 5-3 10-5-2zM22 19l4 3-3 5z" fill="#e8a01c" />
            </svg>
          )}
          {app.running && <span className="absolute bottom-[6px] h-[6px] w-3 rounded-full bg-[#9a9daf]" />}
        </button>
      ))}
      <div className="ml-auto flex items-center">
        <button aria-label="Show hidden icons" className="flex w-12 justify-center"><ChevronUp size={36} strokeWidth={1.700} /></button>
        <button aria-label="OneDrive" className="ml-4 flex w-12 justify-center">
          <svg width="34" height="38" viewBox="0 0 34 38">
            <path d="M7 8a9 9 0 0 1 18-2l2 10H12z" fill="#8f8f8f" />
            <path d="M8 28a9 9 0 0 1-2-18 9 9 0 0 1 12 1l4 17z" fill="#d8d8d8" />
            <circle cx="24" cy="26" r="10" fill="#5cc4fb" />
            <path d="M24 24v8M24 19v3" stroke="#123" strokeWidth="2.600" />
          </svg>
        </button>
        <button className="mx-[13px] w-[78px] text-center text-[23px] leading-[31px]">
          ENG
          <br />
          IN
        </button>
        <button aria-label="Network" className="flex w-12 justify-center">
          <svg width="34" height="28" viewBox="0 0 34 28" fill="none" stroke="#fff" strokeWidth="2">
            <path d="M1 10a22 22 0 0 1 32 0" stroke="#6b6e76" />
            <path d="M6 14a16 16 0 0 1 22 0M10 18a10 10 0 0 1 14 0" />
            <circle cx="17" cy="24" r="3" fill="#fff" stroke="none" />
          </svg>
        </button>
        <button aria-label="Volume" className="flex w-12 justify-center">
          <svg width="34" height="30" viewBox="0 0 34 30" fill="none" stroke="#fff" strokeWidth="2">
            <path d="M2 11h5l8-7v22l-8-7H2z" strokeLinejoin="round" />
            <path d="M19 11q3 4 0 8M23 7q6 8 0 16" />
            <path d="M27 4q8 11 0 22" stroke="#6b6e76" />
          </svg>
        </button>
        <button aria-label="Battery" className="flex w-12 justify-center">
          <svg width="34" height="28" viewBox="0 0 34 28">
            <path d="M12 5h13q4 0 4 4v11q0 4-4 4H6q-4 0-4-4v-4" fill="none" stroke="#fff" strokeWidth="2.200" />
            <path d="M11 9h12q2 0 2 2v8q0 2-2 2H7q-2 0-2-2v-2l6-5z" fill="#fff" />
            <path d="M30 11q3 0 3 3t-3 3z" fill="#fff" />
            <path d="M7 0L1 9h4l-3 7 8-9H6l3-7z" fill="#fff" />
          </svg>
        </button>
        <button className="ml-[9px] flex h-20 w-[202px] items-center justify-end rounded-lg border-t-2 border-[#3a3b3d] bg-[#2a2e38] pr-[18px] text-right text-[23px] leading-[32px]">
          <span className="pb-[6px]">
            02:13
            <br />
            16-05-2025
          </span>
          <svg className="ml-5" width="28" height="30" viewBox="0 0 28 30" fill="none" stroke="#fff" strokeWidth="2.200">
            <path d="M14 2a9 9 0 0 0-9 9v7l-3 6h24l-3-6v-7a9 9 0 0 0-9-9zM10 24a4 4 0 0 0 8 0" strokeLinejoin="round" />
          </svg>
        </button>
      </div>
    </nav>
  )
}

export default function App() {
  return (
    <div className="relative flex h-screen flex-col overflow-hidden bg-[#3b3b3b] font-['Open_Sans','Noto_Sans',sans-serif]">
      <TabStrip />
      <AddressBar />
      <Page />
      <Taskbar />
      <div className="absolute top-4 right-[25px] flex w-[669px] flex-col gap-[27px]">
        <Notifications />
        <Calendar />
      </div>
    </div>
  )
}
